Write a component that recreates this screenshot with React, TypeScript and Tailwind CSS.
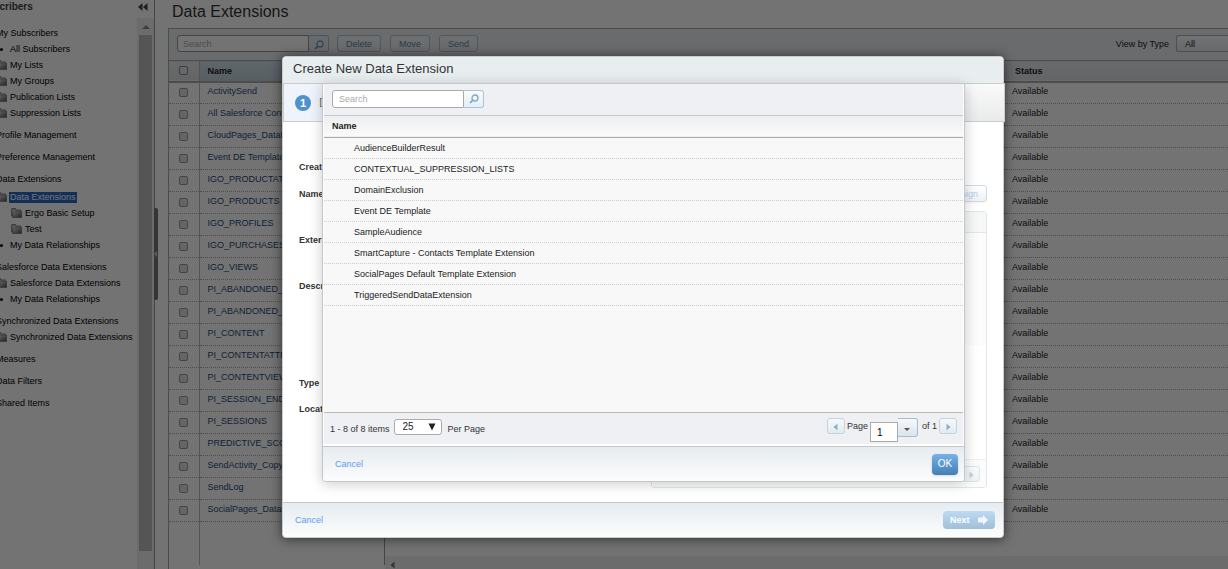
import { ReactNode } from "react";
import clsx from "clsx";

const subscribersTree = [
  {
    title: "My Subscribers",
    items: [
      { label: "All Subscribers", type: "bullet" },
      { label: "My Lists", type: "folder" },
      { label: "My Groups", type: "folder" },
      { label: "Publication Lists", type: "folder" },
      { label: "Suppression Lists", type: "folder" },
    ],
  },
  { title: "Profile Management", items: [] },
  { title: "Preference Management", items: [] },
  {
    title: "Data Extensions",
    items: [
      { label: "Data Extensions", type: "folder", selected: true },
      { label: "Ergo Basic Setup", type: "folder", nested: true },
      { label: "Test", type: "folder", nested: true },
      { label: "My Data Relationships", type: "bullet" },
    ],
  },
  {
    title: "Salesforce Data Extensions",
    items: [
      { label: "Salesforce Data Extensions", type: "folder" },
      { label: "My Data Relationships", type: "bullet" },
    ],
  },
  {
    title: "Synchronized Data Extensions",
    items: [{ label: "Synchronized Data Extensions", type: "folder" }],
  },
  { title: "Measures", items: [] },
  { title: "Data Filters", items: [] },
  { title: "Shared Items", items: [] },
] as {
  title: string;
  items: { label: string; type: string; selected?: boolean; nested?: boolean }[];
}[];

const extensions = [
  "ActivitySend",
  "All Salesforce Contacts",
  "CloudPages_DataExtension",
  "Event DE Template",
  "IGO_PRODUCTATTRIBUTES",
  "IGO_PRODUCTS",
  "IGO_PROFILES",
  "IGO_PURCHASES",
  "IGO_VIEWS",
  "PI_ABANDONED_CARTS",
  "PI_ABANDONED_CART_ITEMS",
  "PI_CONTENT",
  "PI_CONTENTATTRIBUTES",
  "PI_CONTENTVIEWS",
  "PI_SESSION_END",
  "PI_SESSIONS",
  "PREDICTIVE_SCORES",
  "SendActivity_Copy",
  "SendLog",
  "SocialPages_DataExtension",
];

const templates = [
  "AudienceBuilderResult",
  "CONTEXTUAL_SUPPRESSION_LISTS",
  "DomainExclusion",
  "Event DE Template",
  "SampleAudience",
  "SmartCapture - Contacts Template Extension",
  "SocialPages Default Template Extension",
  "TriggeredSendDataExtension",
];

const FolderIcon = () => (
  <svg width="11" height="10" viewBox="0 0 11 10" className="shrink-0">
    <defs>
      <linearGradient id="folder" x1="0" y1="0" x2="1" y2="1">
        <stop offset="0" stopColor="#dcdcdc" />
        <stop offset="1" stopColor="#555" />
      </linearGradient>
    </defs>
    <path d="M0 1L1 0H4.5L5.5 1.5H10V3H11V10H1.5L0 7.5Z" fill="#8a8a8a" />
    <path d="M1 1.5H4.2L5 2.7H9.2V3.2H2L1.2 6Z" fill="#d0d0d0" />
    <path d="M2.2 3.8H10.3V9H2.2Z" fill="url(#folder)" />
  </svg>
);

const SearchIcon = ({ className }: { className?: string }) => (
  <svg width="10" height="10" viewBox="0 0 10 10" fill="none" className={className}>
    <circle cx="6" cy="4" r="3" stroke="currentColor" strokeWidth="1.3" />
    <path d="M3.8 6.2L1 9" stroke="currentColor" strokeWidth="1.7" />
  </svg>
);

const ArrowIcon = ({ d, className }: { d: string; className?: string }) => (
  <svg width="8" height="8" viewBox="0 0 8 8" className={className} fill="currentColor">
    <path d={d} />
  </svg>
);

const LEFT = "M5.5 0.5V7.5L1.5 4Z";
const RIGHT = "M2.5 0.5V7.5L6.5 4Z";
const UP = "M0 6H8L4 2Z";
const DOWN = "M1 3H7L4 6Z";

const PagerButton = ({ label, children }: { label: string; children: ReactNode }) => (
  <button
    aria-label={label}
    className="flex h-4 w-[18px] items-center justify-center rounded-[3px] border border-[#c5d3dd] bg-linear-to-b from-[#f6f9fb] to-[#e3ebf0] pt-0.5 text-[#8fafc6]"
  >
    {children}
  </button>
);

const Sidebar = () => (
  <aside className="flex w-[155px] shrink-0 flex-col overflow-hidden border-r border-[#999]">
    <div className="flex h-[18px] shrink-0 items-center justify-between pr-1.5 pb-1">
      <h2 className="-ml-[25px] text-[10px] font-bold text-[#444]">Subscribers</h2>
      <button aria-label="Collapse panel" className="text-[#3d4a55]">
        <svg width="10" height="8" viewBox="0 0 10 8" fill="currentColor">
          <path d="M4.5 0V8L0 4ZM9.5 0V8L5 4Z" />
        </svg>
      </button>
    </div>
    <div className="flex min-h-0 flex-1">
      <nav className="-ml-1 flex w-[141px] flex-col gap-1.5 overflow-hidden pt-[7px] text-black">
        {subscribersTree.map((section) => (
          <div key={section.title} className="whitespace-nowrap leading-4">
            <a href="#" className="block">
              {section.title}
            </a>
            {section.items.map((item) => (
              <a
                key={item.label}
                href="#"
                className={clsx(
                  "flex items-center gap-0.5",
                  item.selected ? "h-[18px] pt-0.5" : "h-4",
                  item.nested && "pl-[15px]"
                )}
              >
                {item.type === "folder" ? (
                  <FolderIcon />
                ) : (
                  <span className="flex w-[11px] shrink-0 justify-center">
                    <span className="size-[3px] rounded-full bg-black" />
                  </span>
                )}
                <span className={clsx("px-px leading-[11px]", item.selected && "bg-[#2c6bcb] text-white")}>
                  {item.label}
                </span>
              </a>
            ))}
          </div>
        ))}
      </nav>
      <div className="flex w-[17px] flex-col items-center bg-[#f0f0f0] pb-[18px]">
        <div className="flex h-[17px] items-center text-[#888]">
          <ArrowIcon d={UP} />
        </div>
        <div className="w-[13px] flex-1 bg-[#bdbdbd]" />
      </div>
    </div>
  </aside>
);

const ToolbarButton = ({ children }: { children: ReactNode }) => (
  <button className="h-[17px] rounded-[3px] border border-[#b3bfca] bg-linear-to-b from-[#f3f5f7] to-[#e6ebef] px-2 leading-3 text-[#6485a3]">
    {children}
  </button>
);

const DataExtensions = () => (
  <main className="flex min-w-0 flex-1 flex-col pl-[13px]">
    <h1 className="h-7 pl-1 text-base leading-6 text-[#333]">Data Extensions</h1>
    <section className="flex flex-1 flex-col border-t border-l border-[#aaa]">
      <div className="flex h-[31px] items-center bg-[#ebeef1] pb-0.5 pl-2">
        <div className="flex">
          <input
            aria-label="Search data extensions"
            placeholder="Search"
            className="h-[17px] w-[132px] rounded-l-[3px] border border-[#999] bg-white px-[5px] placeholder:text-[#aaa]"
          />
          <button
            aria-label="Search"
            className="flex h-[17px] w-5 items-center justify-center rounded-r-[3px] border border-l-0 border-[#a9bccb] bg-[#e6edf2] text-[#6f9abb]"
          >
            <SearchIcon className="mt-0.5" />
          </button>
        </div>
        <div className="ml-2 flex gap-[9px]">
          <ToolbarButton>Delete</ToolbarButton>
          <ToolbarButton>Move</ToolbarButton>
          <ToolbarButton>Send</ToolbarButton>
        </div>
        <label htmlFor="type" className="ml-auto pr-[7px] text-[#222]">
          View by Type
        </label>
        <select
          id="type"
          className="h-[17px] w-[52px] appearance-none rounded-l-[3px] border border-r-0 border-[#9fb4c4] bg-linear-to-b from-white to-[#e2e6ea] px-2 text-[#222]"
        >
          <option>All</option>
        </select>
      </div>
      <table className="w-full table-fixed border-collapse text-left">
        <colgroup>
          <col className="w-[30px]" />
          <col className="w-[185px]" />
          <col />
          <col className="w-[224px]" />
        </colgroup>
        <thead>
          <tr className="h-[21px] border-t border-b-2 border-t-[#aaa] border-b-[#aaa] bg-linear-to-b from-[#e9ebed] to-[#dcdfe2]">
            <th className="border-r border-[#bbb]">
              <input
                type="checkbox"
                aria-label="Select all"
                className="mx-auto block size-[9px] appearance-none rounded-xs border border-[#888] bg-[#e6e6e6]"
              />
            </th>
            <th className="border-r border-[#aaa] bg-linear-to-b from-[#d4e3ec] to-[#c0d1dc] pl-2 text-[#222]">Name</th>
            <th />
            <th className="pl-[11px] text-[#222]">Status</th>
          </tr>
        </thead>
        <tbody>
          {extensions.map((name) => (
            <tr key={name} className="h-[22px] border-b border-dotted border-[#aaa]">
              <td className="border-r border-[#bbb] [border-right-style:solid]">
                <input
                  type="checkbox"
                  aria-label={name}
                  className="mx-auto block size-[9px] appearance-none rounded-xs border border-[#999] bg-[#e0e0e0]"
                />
              </td>
              <td className="truncate pb-1 pl-2">
                <a href="#" className="text-[#1f4b78]">
                  {name}
                </a>
              </td>
              <td />
              <td className="pb-1 pl-2 text-[#222]">Available</td>
            </tr>
          ))}
        </tbody>
      </table>
      <div className="flex flex-1">
        <div className="mb-1 w-[31px] border-r border-[#bbb]" />
        <div className="mb-1 w-[185px] border-r border-[#999]" />
        <div className="mt-auto flex h-[13px] flex-1 items-center bg-[#efefef] pt-1 pl-1 text-[#777]">
          <ArrowIcon d={LEFT} />
        </div>
      </div>
    </section>
  </main>
);

const TemplatePicker = () => (
  <div
    role="dialog"
    aria-label="Select template"
    className="absolute top-[26px] left-[39px] flex h-[399px] w-[643px] flex-col overflow-hidden rounded-b-[4px] border border-[#c4c7c9] bg-white shadow-[0_2px_14px_rgba(0,0,0,0.2)]"
  >
    <div className="mx-px flex h-8 items-center border-b border-[#c9c9c9] bg-[#eff0f3] px-2 pb-0.5">
      <input
        aria-label="Search templates"
        placeholder="Search"
        className="h-[18px] w-[132px] rounded-l-[3px] border border-[#aaa] bg-white px-1.5 placeholder:text-[#aaa]"
      />
      <button
        aria-label="Search"
        className="flex h-[18px] w-5 items-center justify-center rounded-r-[3px] border border-l-0 border-[#a9c3d8] bg-linear-to-b from-[#fafcfd] to-[#e6eef4] text-[#7aa7cd]"
      >
        <SearchIcon />
      </button>
    </div>
    <div className="mx-px flex-1 bg-[#f8f8f8]">
      <table className="w-full border-collapse text-left">
        <thead>
          <tr className="h-[21px] border-b border-[#aaa] bg-linear-to-b from-[#eceef0] to-[#fafafb]">
            <th className="pl-2 text-[#222]">Name</th>
          </tr>
        </thead>
        <tbody>
          {templates.map((name) => (
            <tr key={name} className="h-[21px] border-b border-dotted border-[#ccc]">
              <td className="pl-[30px] text-[#222]">{name}</td>
            </tr>
          ))}
        </tbody>
      </table>
    </div>
    <div className="mx-px flex h-8 items-start border-t border-[#bbb] bg-[#eff0f3] px-1.5 pt-1 text-[#333]">
      <span className="pt-1">1 - 8 of 8 items</span>
      <div className="relative mt-0.5 ml-1">
        <select
          id="per-page"
          className="block h-4 w-12 appearance-none rounded-[3px] border border-[#aaa] bg-white pl-2 text-[10px] leading-3 text-[#222]"
        >
          <option>25</option>
        </select>
        <svg width="8" height="8" viewBox="0 0 8 8" className="pointer-events-none absolute top-1 right-1.5">
          <path d="M0.5 0.5H7.5L4 7.5Z" fill="#222" />
        </svg>
      </div>
      <label htmlFor="per-page" className="pt-1 pl-1.5">
        Per Page
      </label>
      <div className="ml-auto flex items-start pt-px">
        <PagerButton label="Previous page">
          <ArrowIcon d={LEFT} />
        </PagerButton>
        <label htmlFor="page" className="px-0.5">
          Page
        </label>
        <input
          id="page"
          defaultValue="1"
          className="mt-1 h-5 w-7 border border-[#aaa] bg-white px-1.5 text-[10px] text-black"
        />
        <button
          aria-label="Choose page"
          className="flex h-[19px] w-5 items-center justify-center rounded-r-[3px] border border-l-0 border-[#a9bccb] bg-linear-to-b from-[#f6f9fb] to-[#d9e4ec] pt-0.5 text-[#555]"
        >
          <ArrowIcon d={DOWN} />
        </button>
        <span className="pr-0.5 pl-1">of 1</span>
        <PagerButton label="Next page">
          <ArrowIcon d={RIGHT} />
        </PagerButton>
      </div>
    </div>
    <div className="mt-0.5 flex h-[35px] items-center justify-between border-t border-[#c4c7c9] bg-linear-to-b from-[#e6ecf0] to-[#fcfdfd] pr-1.5 pl-3">
      <a href="#" className="text-[#5c9ded]">
        Cancel
      </a>
      <button className="h-[21px] w-[26px] rounded-[4px] bg-linear-to-b from-[#77b2e6] to-[#4380b5] text-[10px] text-white shadow-sm">
        OK
      </button>
    </div>
  </div>
);

const CreateDialog = () => (
  <div
    role="dialog"
    aria-label="Create New Data Extension"
    className="relative flex h-[482px] w-[722px] flex-col rounded-[4px] border border-[#ccc] bg-white shadow-[0_1px_12px_rgba(0,0,0,0.6)]"
  >
    <h2 className="h-[26px] rounded-t-[4px] bg-[#e8edf0] pl-2.5 text-[13px] leading-6 text-[#333]">
      Create New Data Extension
    </h2>
    <div className="-mr-0.5 flex h-[39px] items-center border border-[#ccc] bg-linear-to-b from-[#fafafa] to-[#e9eaeb]">
      <div className="flex h-full w-40 items-center gap-2 bg-[#eff4fc] pl-[11px]">
        <span className="flex size-4 items-center justify-center rounded-full bg-[#4f92cb] text-[11px] font-bold text-white">
          1
        </span>
        <span className="text-xs text-[#777]">Details</span>
      </div>
    </div>
    <div className="flex flex-1 justify-between px-4">
      <div className="flex flex-col pt-[37px] font-bold text-[#333]">
        <span className="h-[27px]">Creation</span>
        <span className="h-[46px]">Name</span>
        <span className="h-[46px]">External Key</span>
        <span className="h-[97px]">Description</span>
        <span className="h-[26px]">Type</span>
        <span>Location</span>
      </div>
      <div className="mb-3.5 flex w-[336px] flex-col pt-[63px]">
        <button className="ml-auto h-[17px] rounded-[3px] border border-[#d0dae2] bg-linear-to-b from-white to-[#edf2f6] px-2 leading-3 text-[#b4cde8] shadow-xs">
          Campaign
        </button>
        <div className="mt-[9px] flex flex-1 flex-col rounded-[3px] border border-[#e3e5e6]">
          <div className="h-[21px] border-b border-[#e3e5e6] bg-[#f6f8f8]" />
          <div className="h-28 bg-[#fcfcfc]" />
          <div className="mt-auto flex h-7 items-center justify-end border-t border-[#e3e5e6] bg-[#fafbfb] pr-1.5 opacity-60">
            <PagerButton label="Next campaigns">
              <ArrowIcon d={RIGHT} />
            </PagerButton>
          </div>
        </div>
      </div>
    </div>
    <div className="flex h-[35px] items-center justify-between rounded-b-[4px] border-t border-[#c4c7c9] bg-linear-to-b from-[#e6ecf0] to-[#fcfdfd] pr-2 pl-3">
      <a href="#" className="text-[#5c9ded]">
        Cancel
      </a>
      <button className="flex h-[18px] w-[52px] items-center justify-between rounded-[4px] bg-linear-to-b from-[#bcdaf1] to-[#a1bfd9] px-[7px] font-bold text-white">
        Next
        <svg width="10" height="10" viewBox="0 0 10 10" className="shrink-0" fill="#eef6fc">
          <path d="M0 2.5H5V0L10 5L5 10V7.5H0Z" />
        </svg>
      </button>
    </div>
    <TemplatePicker />
  </div>
);

export default function App() {
  return (
    <div className="relative h-screen overflow-hidden bg-white font-['Liberation_Sans',Arial,sans-serif] text-[9px] leading-4">
      <div className="flex h-full">
        <Sidebar />
        {/* splitter handle */}
        <div className="-ml-px flex w-1 items-center">
          <div className="-mt-[61px] flex h-[92px] w-full items-center rounded-r-xs bg-[#777] text-[#ccc]">
            <svg width="3" height="6" viewBox="0 0 3 6" fill="currentColor">
              <path d="M3 0V6L0 3Z" />
            </svg>
          </div>
        </div>
        <div className="-ml-[3px] flex min-w-0 flex-1">
          <DataExtensions />
        </div>
      </div>
      <div className="absolute inset-0 flex items-start justify-center bg-black/55 pt-14 pl-[58px]">
        <CreateDialog />
      </div>
    </div>
  );
}
